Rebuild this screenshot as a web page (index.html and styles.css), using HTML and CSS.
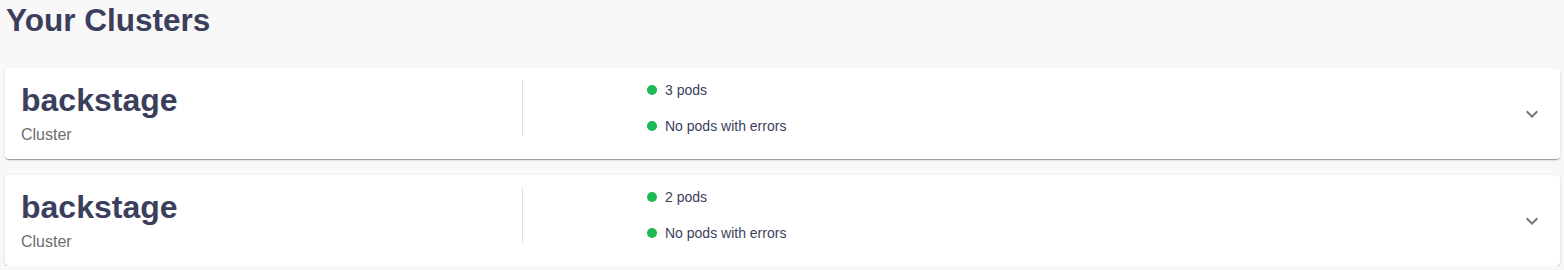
FILE: index.html
```html
<!DOCTYPE html>
<html lang="en">
<head>
  <meta charset="UTF-8">
  <meta name="viewport" content="width=device-width, initial-scale=1.0">
  <title>Your Clusters</title>
  <link rel="stylesheet" href="styles.css">
</head>
<body>
  <div class="page">
    <h2 class="page-title">Your Clusters</h2>

    <div class="cluster-list">
      <div class="cluster-card">
        <div class="summary">
          <div class="summary-content">
            <div class="cluster-name">
              <h3>backstage</h3>
              <p>Cluster</p>
            </div>
            <div class="divider-cell"><div class="divider"></div></div>
            <div class="status-list">
              <div class="status-ok"><span class="dot"></span>3 pods</div>
              <div class="status-ok"><span class="dot"></span>No pods with errors</div>
            </div>
          </div>
          <button class="expand-btn" aria-label="expand">
            <svg viewBox="0 0 24 24" width="24" height="24"><path d="M16.59 8.59L12 13.17 7.41 8.59 6 10l6 6 6-6z"/></svg>
          </button>
        </div>
      </div>

      <div class="cluster-card">
        <div class="summary">
          <div class="summary-content">
            <div class="cluster-name">
              <h3>backstage</h3>
              <p>Cluster</p>
            </div>
            <div class="divider-cell"><div class="divider"></div></div>
            <div class="status-list">
              <div class="status-ok"><span class="dot"></span>2 pods</div>
              <div class="status-ok"><span class="dot"></span>No pods with errors</div>
            </div>
          </div>
          <button class="expand-btn" aria-label="expand">
            <svg viewBox="0 0 24 24" width="24" height="24"><path d="M16.59 8.59L12 13.17 7.41 8.59 6 10l6 6 6-6z"/></svg>
          </button>
        </div>
      </div>
    </div>
  </div>
</body>
</html>
```

FILE: styles.css
```css
* {
  margin: 0;
  padding: 0;
  box-sizing: border-box;
}

body {
  font-family: 'Liberation Sans', Arial, Helvetica, sans-serif;
  background: #f8f8f8;
  color: #3b3f5c;
}

.page {
  padding: 0 4px 0 5px;
}

.page-title {
  font-size: 31.5px;
  font-weight: 700;
  line-height: 40px;
  padding-left: 1px;
  margin-bottom: 28px;
  color: #3b3f5c;
}

.cluster-list {
  display: flex;
  flex-direction: column;
  gap: 16px;
}

.cluster-card {
  background: #fff;
  border-radius: 4px;
  box-shadow: 0 2px 1px -1px rgba(0, 0, 0, 0.2), 0 1px 1px 0 rgba(0, 0, 0, 0.14), 0 1px 3px 0 rgba(0, 0, 0, 0.12);
}

.summary {
  display: flex;
  align-items: center;
  padding: 0 16px;
  min-height: 48px;
}

.summary-content {
  flex: 1;
  display: flex;
  align-items: flex-start;
  margin: 12px 0;
}

.cluster-name {
  width: 501px;
}

.cluster-name h3 {
  font-size: 32px;
  font-weight: 700;
  line-height: 40px;
  color: #3b3f5c;
}

.cluster-name p {
  font-size: 16px;
  line-height: 24px;
  margin-top: 3px;
  color: #6e6e6e;
}

.divider-cell {
  width: 125px;
}

.divider {
  width: 1px;
  height: 56px;
  background: #e0e0e0;
}

.status-list {
  display: flex;
  flex-direction: column;
  gap: 16px;
}

.status-ok {
  display: flex;
  align-items: center;
  height: 20px;
  font-size: 14px;
  color: #3b3f5c;
}

.dot {
  width: 10px;
  height: 10px;
  border-radius: 50%;
  background: #1db954;
  margin: 0 8px 0 0;
}

.expand-btn {
  background: none;
  border: none;
  padding: 12px;
  margin-right: -12px;
  display: flex;
  cursor: pointer;
}

.expand-btn svg {
  fill: rgba(0, 0, 0, 0.54);
}
```
